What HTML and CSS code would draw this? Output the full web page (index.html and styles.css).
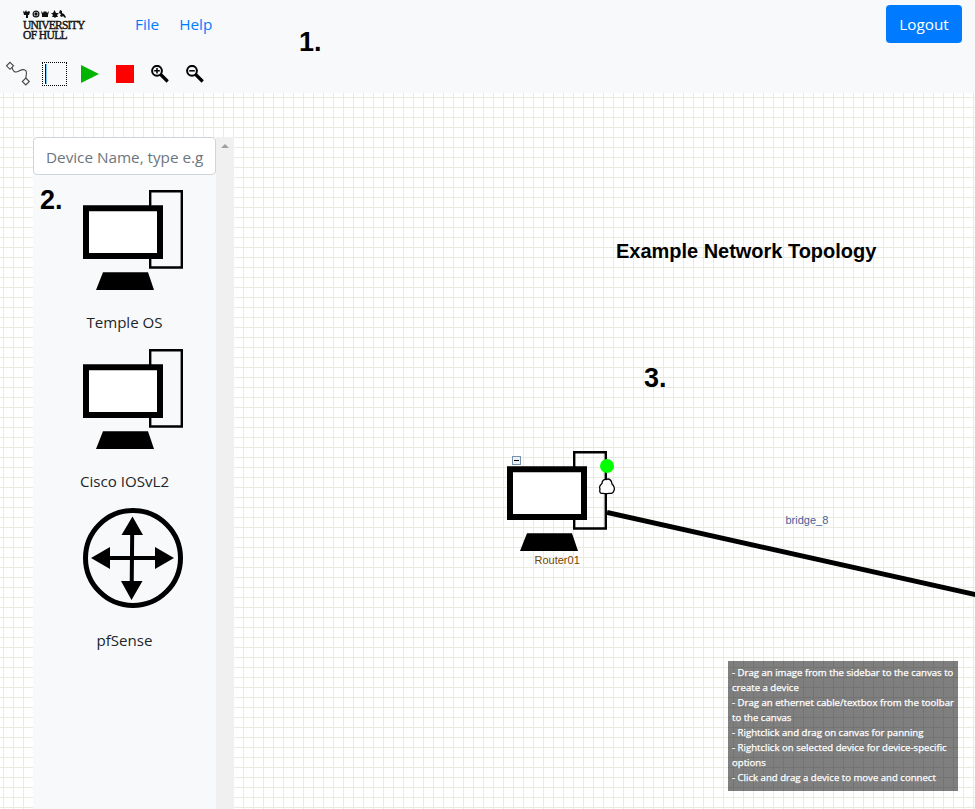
FILE: index.html
```html
<!DOCTYPE html>
<html lang="en">
<head>
<meta charset="utf-8">
<title>Network Topology Editor</title>
<link rel="stylesheet" href="styles.css">
</head>
<body>
<svg class="defs" width="0" height="0">
  <symbol id="pc" viewBox="0 0 100 100">
    <path class="tower" d="M67.200 1.200H98.800V77.500H67.200Z"/>
    <path class="screen" d="M3 18.300H77V66H3Z"/>
    <path d="M20 82.300H65L71 100H13Z"/>
  </symbol>
</svg>
<header class="header">
  <nav class="navbar">
    <div class="brand">
      <svg class="crest" viewBox="0 0 44 8" width="44" height="8">
        <path d="M0 1l2 1 1-2 1 2 2-1 1 1-1 3H1zM3 5h2v3H3z"/>
        <circle class="ring" cx="13" cy="4" r="2.900"/><circle cx="13" cy="4" r="1.700"/>
        <path d="M18 1l2 2 1-2 1 1 1-1 1 2 2-2-1 4v2h-6V5zM28 3l2 0 1.500-3 1.500 3 3 0-2 2 1 2-2 0-1 1-1-1-2 0 1-2zM37 0l2 1v2l2 1 2 3-1 1-2-2-1 1-2-1 1-2-2-1z"/>
      </svg>
      <div class="brand-name">UNIVERSITY</div>
      <div class="brand-name brand-city">OF HULL</div>
    </div>
    <a class="nav-link">File</a>
    <a class="nav-link">Help</a>
    <button class="logout">Logout</button>
  </nav>
  <div class="toolbar">
    <svg class="cable" viewBox="0 0 26 26" width="26" height="26">
      <path d="M5 1.300l3.500 3.500L5 8.300 1.500 4.800ZM20.800 17l3.500 3.500-3.500 3.500-3.500-3.500Z"/>
      <path d="M7 6.500C8 10 9.500 12.500 14 10S21.500 8.500 21.500 12L20.800 17"/>
    </svg>
    <span class="textbox"></span>
    <svg class="play" viewBox="0 0 18 18" width="18" height="18"><path d="M0 0L18 9L0 18Z"/></svg>
    <span class="stop"></span>
    <svg class="lens" viewBox="0 0 18 18" width="18" height="18"><circle cx="6" cy="5.800" r="4.900"/><path class="sign" d="M3.200 5.800h5.600M6 3v5.600"/><path class="handle" d="M9.700 9.500l7 7"/></svg>
    <svg class="lens" viewBox="0 0 18 18" width="18" height="18"><circle cx="6" cy="5.800" r="4.900"/><path class="sign" d="M3.200 5.800h5.600"/><path class="handle" d="M9.700 9.500l7 7"/></svg>
  </div>
</header>
<main class="workspace">
  <aside class="sidebar">
    <div class="devices">
      <input class="search" placeholder="Device Name, type e.g">
      <figure class="device"><svg width="100" height="100"><use href="#pc"/></svg><figcaption>Temple OS</figcaption></figure>
      <figure class="device"><svg width="100" height="100"><use href="#pc"/></svg><figcaption>Cisco IOSvL2</figcaption></figure>
      <figure class="device">
        <svg viewBox="0 0 100 100" width="100" height="100">
          <circle class="router-ring" cx="50" cy="50" r="47.500"/>
          <path class="router-line" d="M24 50H76M49.200 24L48.700 77"/>
          <path d="M49.500 8.500L60 27H38.500ZM48.500 92L38 73H59.500ZM8 50L27 39V61ZM91 50L72 39V61Z"/>
        </svg>
        <figcaption>pfSense</figcaption>
      </figure>
    </div>
    <div class="scrollbar"><span class="scroll-up"></span></div>
  </aside>
  <h1 class="title">Example Network Topology</h1>
  <svg class="link" width="368" height="100"><path d="M0 9.500L370 92"/></svg>
  <span class="link-label">bridge_8</span>
  <svg class="node" width="100" height="100"><use href="#pc"/></svg>
  <svg class="fold" viewBox="0 0 9 9" width="9" height="9"><rect x=".5" y=".5" width="8" height="8"/><path d="M2 4.500h5"/></svg>
  <span class="status"></span>
  <svg class="cloud" viewBox="0 0 17 17" width="17" height="17"><path d="M4 5.500C4 2.500 6 1 8.500 1.500C11 0 14 2.500 14 6C16.500 8 17 11.500 15.500 13.500C15.500 15 13 15.500 11 15.300C8 16 6 15.500 5 15.300C1.500 16 1.500 13 2 11C1 9 2 7 4 5.500Z"/></svg>
  <span class="node-label">Router01</span>
  <span class="mark mark-one">1.</span>
  <span class="mark mark-two">2.</span>
  <span class="mark mark-three">3.</span>
  <div class="hints">
    - Drag an image from the sidebar to the canvas to<br>create a device<br>
    - Drag an ethernet cable/textbox from the toolbar<br>to the canvas<br>
    - Rightclick and drag on canvas for panning<br>
    - Rightclick on selected device for device-specific<br>options<br>
    - Click and drag a device to move and connect
  </div>
</main>
</body>
</html>
```
FILE: styles.css
```css
* { box-sizing: border-box; }
body { margin: 0; height: 809px; overflow: hidden; background: #fff; color: #212529; font: 16px/24px "Open Sans", sans-serif; position: relative; }
svg { display: block; }
.defs { position: absolute; }
.header { height: 93px; background: #f8f9fb; }
.navbar { display: flex; align-items: flex-start; height: 61px; padding: 5px 13px 0 23px; }
.brand { width: 112px; padding-top: 5px; color: #111; fill: #111; }
.crest { margin-bottom: 2px; }
.brand-name { height: 10px; font: 11.500px/10px "Liberation Serif", serif; letter-spacing: -.75px; white-space: nowrap; -webkit-text-stroke: .4px #111; }
.brand-city { letter-spacing: -.6px; }
.ring { fill: none; stroke: #111; stroke-width: 1.2; }
.nav-link { margin-right: 20px; padding-top: 7px; color: #007bff; font-size: 15.300px; }
.logout { width: 76px; height: 38px; margin-left: auto; padding: 0 0 1px; border: 0; border-radius: 4px; background: #007bff; color: #fff; font: 15.300px/24px "Open Sans", sans-serif; }
.toolbar { display: flex; align-items: flex-start; padding-left: 5px; }
.cable { fill: none; stroke: #444; stroke-width: 1.1; }
.textbox { width: 25px; height: 24px; margin: 1px 14px 0 11px; border: 1px dotted #000; }
.textbox::before { content: ""; display: block; width: 2px; height: 20px; margin: 1px 0 0 2px; background: linear-gradient(90deg, #301008 50%, #80c8f8 50%); }
.play { margin-top: 4px; fill: #00b400; }
.stop { width: 18px; height: 18px; margin: 4px 17px 0; background: #f00; }
.lens { margin: 4px 17px 0 0; fill: none; stroke: #000; stroke-width: 2; }
.lens .sign { stroke-width: 1.500; }
.lens .handle { stroke-width: 3.200; }
.workspace { height: 716px; padding: 44px 0 0 33px; background-image: linear-gradient(90deg, #e9ebe0 1px, transparent 1px), linear-gradient(#e9ebe0 1px, transparent 1px); background-size: 10px 10px; background-position: 3px 4px; }
.sidebar { display: flex; width: 201px; height: 672px; background: #f8f9fb; }
.devices { width: 183px; }
.search { display: block; width: 183px; height: 38px; padding: 7px 10px 5px 12px; border: 1px solid #ced4da; border-radius: 4px; background: #fff; font: 15.300px "Open Sans", sans-serif; letter-spacing: -.02px; }
.search::placeholder { color: #6c757d; opacity: 1; }
.device { height: 159px; margin: 0; padding: 15px 0 0 50px; }
.device figcaption { margin: 20px 0 0 -50px; text-align: center; font-size: 15.100px; }
.scrollbar { width: 18px; background: #f0f0f0; }
.scroll-up { display: block; width: 0; margin: 7px 0 0 5px; border: solid transparent; border-width: 0 4px 4px; border-bottom-color: #a0a0a0; }
.tower { fill: none; stroke: #000; stroke-width: 2.400; }
.screen { fill: #fff; stroke: #000; stroke-width: 6; }
.router-ring { fill: none; stroke: #000; stroke-width: 5; }
.router-line { stroke: #000; stroke-width: 4; }
.title, .mark, .node, .fold, .status, .cloud, .node-label, .link, .link-label, .hints { position: absolute; }
.title { left: 616px; top: 239px; margin: 0; color: #000; font: bold 20px/24px "Liberation Sans", sans-serif; letter-spacing: -.02px; white-space: nowrap; }
.mark { color: #000; font: bold 27px/30px "Liberation Sans", sans-serif; }
.mark-one { left: 299px; top: 27px; }
.mark-two { left: 40px; top: 185px; }
.mark-three { left: 644px; top: 363px; }
.node { left: 507px; top: 451px; }
.fold { left: 512px; top: 456px; fill: #e8f0f8; stroke: #7890a8; }
.fold path { stroke: #000; }
.status { left: 600px; top: 459px; width: 14px; height: 14px; border-radius: 50%; background: #0f0; }
.cloud { left: 598px; top: 478px; fill: #fff; stroke: #000; stroke-width: 1.300; }
.node-label { left: 534.500px; top: 553px; color: #774400; font: 11px/14px "Liberation Sans", sans-serif; }
.link { left: 607px; top: 503px; fill: none; stroke: #000; stroke-width: 5; }
.link-label { left: 785.500px; top: 513px; color: #446299; font: 11px/14px "Liberation Sans", sans-serif; }
.hints { left: 728px; top: 661px; width: 230px; height: 130px; padding: 4px; background: rgba(0, 0, 0, .5); color: #fff; font: 9.600px/15px "Open Sans", sans-serif; letter-spacing: 0; -webkit-text-stroke: .25px #fff; white-space: nowrap; }
```
